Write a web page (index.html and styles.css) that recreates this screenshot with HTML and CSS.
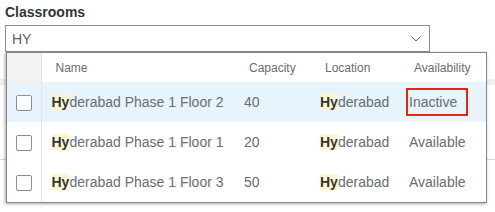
FILE: index.html
```html
<!DOCTYPE html>
<html>
<head>
    <meta charset="UTF-8">
    <title>Classrooms</title>
    <link rel="stylesheet" href="styles.css">
</head>
<body>
    <div class="page">
        <div class="field">
            <div class="label">Classrooms</div>
            <div class="combo">
                <span class="value">HY</span>
                <svg class="chevron" width="10" height="6" viewBox="0 0 10 6">
                    <path d="M0.5 0.5 L5 5 L9.5 0.5" fill="none" stroke="#6a6d70" stroke-width="1"/>
                </svg>
            </div>
        </div>

        <div class="backdrop">
            <div class="band"></div>
            <div class="line"></div>
        </div>

        <div class="popup">
            <table class="list">
                <colgroup>
                    <col class="c-check">
                    <col class="c-name">
                    <col class="c-cap">
                    <col class="c-loc">
                    <col class="c-avail">
                </colgroup>
                <thead>
                    <tr>
                        <th class="check-head"></th>
                        <th>Name</th>
                        <th>Capacity</th>
                        <th>Location</th>
                        <th>Availability</th>
                    </tr>
                </thead>
                <tbody>
                    <tr class="selected">
                        <td class="check"><span class="box"></span></td>
                        <td><b class="hl">Hy</b>derabad Phase 1 Floor 2</td>
                        <td>40</td>
                        <td><b class="hl">Hy</b>derabad</td>
                        <td><span class="flag">Inactive</span></td>
                    </tr>
                    <tr>
                        <td class="check"><span class="box"></span></td>
                        <td><b class="hl">Hy</b>derabad Phase 1 Floor 1</td>
                        <td>20</td>
                        <td><b class="hl">Hy</b>derabad</td>
                        <td>Available</td>
                    </tr>
                    <tr>
                        <td class="check"><span class="box"></span></td>
                        <td><b class="hl">Hy</b>derabad Phase 1 Floor 3</td>
                        <td>50</td>
                        <td><b class="hl">Hy</b>derabad</td>
                        <td>Available</td>
                    </tr>
                </tbody>
            </table>
        </div>
    </div>
</body>
</html>
```

FILE: styles.css
```css
body {
    margin: 0;
    font-family: "Liberation Sans", Arial, sans-serif;
    background-color: #fff;
    color: #6a6d70;
}
.page {
    position: relative;
    width: 495px;
    height: 212px;
    overflow: hidden;
}
.field {
    padding: 4px 0 0 5px;
}
.label {
    font-size: 14px;
    font-weight: bold;
    color: #32363a;
    line-height: 16px;
    height: 21px;
}
.combo {
    height: 25px;
    border: 1px solid #89919a;
    display: flex;
    align-items: center;
    justify-content: space-between;
    padding: 0 8px 0 6px;
    width: 409px;
}
.value {
    font-size: 14px;
    color: #5b5e61;
}
.chevron {
    display: block;
    margin-top: 1px;
}
.backdrop .band {
    position: absolute;
    left: 0;
    top: 79px;
    width: 495px;
    height: 6px;
    background-color: #f0f0f0;
}
.backdrop .line {
    position: absolute;
    left: 0;
    top: 159px;
    width: 495px;
    height: 1px;
    background-color: #d9d9d9;
}
.popup {
    position: absolute;
    left: 6px;
    top: 52px;
    width: 479px;
    border: 1px solid #7d8893;
    background-color: #fff;
    box-shadow: -1px 1px 3px rgba(0, 0, 0, 0.35);
}
.list {
    width: 479px;
    table-layout: fixed;
    border-collapse: collapse;
}
.c-check { width: 34px; }
.c-name { width: 193px; }
.c-cap { width: 76px; }
.c-loc { width: 89px; }
.c-avail { width: 87px; }
.list th {
    height: 29px;
    padding: 0 0 0 15px;
    text-align: left;
    font-weight: normal;
    font-size: 12px;
    color: #6a6d70;
}
.list th:nth-child(2) {
    padding-left: 14px;
}
.list th.check-head {
    padding: 0;
    background-color: #f2f2f2;
    border-right: 1px solid #e5e5e5;
}
.list td {
    height: 40px;
    padding: 0 0 0 10px;
    font-size: 14px;
    color: #6a6d70;
    white-space: nowrap;
}
.list td.check {
    padding: 0;
    text-align: center;
    border-right: 1px solid #e5e5e5;
}
.selected td {
    background-color: #e7f4fb;
}
.box {
    display: inline-block;
    width: 14px;
    height: 14px;
    border: 1px solid #89919a;
    border-radius: 2px;
    background-color: #fff;
    vertical-align: middle;
    margin-left: 1px;
}
.hl {
    color: #32363a;
    background-color: #fff6cf;
}
.flag {
    display: inline-block;
    margin-left: -3px;
    padding: 0 9px 0 1px;
    height: 24px;
    line-height: 24px;
    border: 2px solid #e8220e;
}
```
